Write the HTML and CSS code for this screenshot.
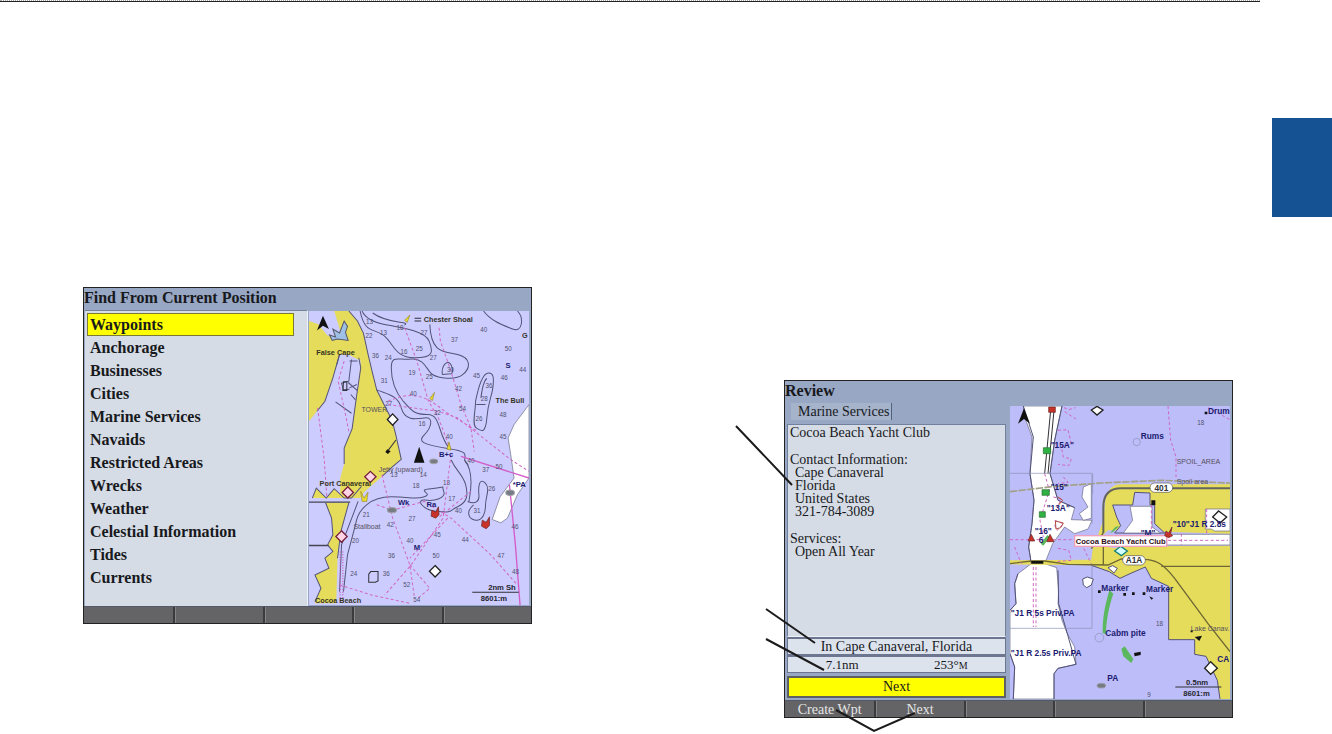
FILE: index.html
```html
<!DOCTYPE html>
<html lang="en">
<head>
<meta charset="utf-8">
<title>Find and Review</title>
<link rel="stylesheet" href="styles.css">
</head>
<body>
<hr class="rule">
<main class="page">
  <section class="device find">
    <h2 class="title">Find From Current Position</h2>
    <div class="screen">
      <ul class="menu">
        <li><button class="item selected">Waypoints</button></li>
        <li><button class="item">Anchorage</button></li>
        <li><button class="item">Businesses</button></li>
        <li><button class="item">Cities</button></li>
        <li><button class="item">Marine Services</button></li>
        <li><button class="item">Navaids</button></li>
        <li><button class="item">Restricted Areas</button></li>
        <li><button class="item">Wrecks</button></li>
        <li><button class="item">Weather</button></li>
        <li><button class="item">Celestial Information</button></li>
        <li><button class="item">Tides</button></li>
        <li><button class="item">Currents</button></li>
      </ul>
      <svg class="map" viewBox="12 20 663 880" preserveAspectRatio="none" role="img" aria-label="Chart of Cape Canaveral">
        <rect class="water" x="12" y="20" width="663" height="880"/>
        <!-- land -->
        <path class="land" d="M12 50L40 60 66 92 92 104 112 98 100 60 88 20H132L158 50 176 86 190 150 202 200 216 256 238 300 262 346 274 392 290 464 264 486 232 515 180 560 166 580H22L34 550 64 580 88 552 118 580H106V520L118 478 118 430 142 372 156 270 160 250 168 170 150 160 130 150H104L84 220 60 290 36 320 12 350Z"/>
        <path class="land" d="M62 594H132L108 680 98 760 94 895H30L48 850 30 810 72 790 60 760 84 740 68 720 84 690 80 640Z"/>
        <path class="channel" d="M12 592H136M12 722H72"/>
        <path class="coast" d="M132 20L158 50 176 86 190 150 202 200 216 256 238 300 262 346 274 392 290 464 264 486 232 515 M118 478L118 430 142 372 156 270 168 190 162 160M104 150L84 220 60 290 36 320 M22 580L34 550 64 580 88 552 118 580H140L170 545M132 594L108 680 98 760M62 594L80 640 84 690 68 720 84 740 60 760 72 790 30 810 48 850 30 890"/>
        <path class="inlet" d="M74 92L92 98 84 74 104 86 118 50 128 66 122 84 130 108 98 104 82 108Z"/>
        <path class="coast" d="M104 150L96 180M140 165L132 230 110 236 116 256 134 254M92 292L140 326M134 250L156 240M138 270L152 286M134 170H158M130 234L158 258"/>
        <path class="shoal" d="M675 300L630 360 612 400 620 450 630 520 588 576 564 644 590 654 610 640 640 570 675 520Z"/>
        <!-- depth contours -->
        <path class="contour" d="M166 20C180 90 208 70 238 94S270 160 330 160 386 140 374 110 290 70 248 62 180 40 172 20M204 26C250 60 320 50 300 62M376 60C380 150 420 140 460 150S500 190 476 210 400 220 384 210 360 160 320 164 260 150 260 190 270 260 296 290 330 330 370 330 400 390 434 430M216 256C250 270 280 272 290 310S330 344 360 340 380 370 360 390 350 420 434 432 460 460 492 480M414 210C410 190 422 172 432 174S450 204 440 208ZM514 290C520 260 532 210 550 206S570 220 566 250 552 290 548 340 530 380 516 370 514 320 514 290ZM530 280C534 250 538 228 548 222M516 300H544M538 20C560 50 596 62 626 74S660 40 640 20"/>
        <path class="contour" d="M116 860L128 750 152 660C160 610 200 576 260 576S330 586 360 576 330 556 380 552 410 540 418 560 390 590 362 586 350 616 400 620 430 620 460 606 492 570 484 540 456 500 440 465M480 465C510 500 500 560 494 590M508 600C484 620 492 644 514 646S544 624 544 600 560 550 542 534 522 550 524 570 514 600 490 590M104 860L110 720 160 590"/>
        <!-- routes and borders -->
        <path class="dash" d="M38 310L58 465 66 580M118 170L100 230 122 330 132 380M300 70L326 140 340 180 372 290 402 340 440 440M404 70L408 110 440 200 470 300 500 370 510 440M250 300L400 320 460 340 620 465 675 500M250 290C320 260 360 270 420 320L520 380M232 510L264 640 316 780 330 880M440 450L416 640 320 780 240 870M216 600L264 616 360 590 440 640 560 750 640 840M316 780L376 850 340 880M104 840L200 870 320 896M430 640L316 760M500 560L400 640"/>
        <path class="route" d="M616 540L634 720 648 900M470 455L675 520"/>
        <path class="hatch" d="M106 740V890M114 740V890"/>
        <!-- position marker and chart symbols -->
        <path class="ink" d="M344 426L328 474H360ZM54 34L36 78 54 64 72 74ZM248 434L258 440 250 448 242 442Z"/>
        <path class="thin" d="M250 438L274 406"/>
        <g class="diamond"><path d="M264 328L280 345 264 362 248 345Z"/><path d="M392 782L409 799 392 816 375 799Z"/></g>
        <g class="diamond pinkmark"><path d="M197 500L214 516 197 533 180 516ZM129 546L146 563 129 580 112 563ZM110 678L127 695 110 712 93 695Z"/></g>
        <path class="thin" d="M198 800H220V828L212 832H192V808ZM116 232H126V258H114Z"/>
        <g class="buoy"><path d="M382 616L394 622 402 606 404 630 394 640 380 634ZM534 646L546 652 556 636 556 662 546 672 532 664Z"/></g>
        <g class="light"><path d="M300 48L316 32 308 54ZM376 282L390 264 384 288ZM428 434L434 412 440 436ZM168 560L178 580 190 562 186 590H172Z"/></g>
        <g class="wreck"><ellipse cx="388" cy="470" rx="12" ry="7"/><ellipse cx="262" cy="616" rx="14" ry="8"/><ellipse cx="618" cy="564" rx="13" ry="8"/></g>
        <!-- soundings -->
        <g class="sounding">
          <text x="184" y="60">13</text><text x="226" y="92">13</text><text x="182" y="102">22</text><text x="276" y="78">18</text><text x="348" y="92">27</text><text x="440" y="114">37</text><text x="528" y="84">40</text><text x="602" y="140">50</text><text x="334" y="140">25</text><text x="202" y="162">36</text><text x="240" y="168">24</text><text x="376" y="166">27</text><text x="288" y="148">16</text><text x="312" y="212">19</text><text x="364" y="224">25</text><text x="428" y="202">30</text><text x="228" y="236">31</text><text x="242" y="304">27</text><text x="316" y="274">40</text><text x="506" y="222">45</text><text x="590" y="228">46</text><text x="544" y="250">36</text><text x="530" y="290">28</text><text x="452" y="260">42</text><text x="464" y="318">54</text><text x="514" y="348">26</text><text x="586" y="336">48</text><text x="586" y="402">45</text><text x="342" y="364">16</text><text x="424" y="402">40</text><text x="388" y="330">32</text><text x="490" y="474">40</text><text x="646" y="204">44</text><text x="258" y="516">13</text><text x="346" y="516">14</text><text x="416" y="542">13</text><text x="534" y="502">37</text><text x="574" y="494">50</text><text x="324" y="550">18</text><text x="432" y="588">17</text><text x="552" y="558">26</text><text x="174" y="636">21</text><text x="312" y="648">27</text><text x="452" y="624">40</text><text x="508" y="624">31</text><text x="246" y="666">42</text><text x="306" y="714">40</text><text x="388" y="696">45</text><text x="472" y="712">44</text><text x="622" y="672">46</text><text x="142" y="714">20</text><text x="250" y="760">36</text><text x="384" y="760">50</text><text x="580" y="760">47</text><text x="136" y="814">24</text><text x="234" y="812">36</text><text x="296" y="846">52</text><text x="624" y="808">48</text><text x="326" y="892">54</text>
        </g>
        <g class="place"><text x="34" y="152">False Cape</text><text x="358" y="52">Chester Shoal</text><text x="574" y="296">The Bull</text><text x="44" y="544">Port Canaveral</text><text x="654" y="100">G</text><text x="30" y="894">Cocoa Beach</text></g>
        <g class="place minor"><text x="170" y="322">TOWER</text><text x="222" y="502">Jetty (upward)</text><text x="146" y="674">Stallboat</text></g>
        <g class="mark"><text x="280" y="602">Wk</text><text x="626" y="548">*PA</text><text x="328" y="734">M</text><text x="366" y="606">Ra</text><text x="404" y="456">B+c</text><text x="604" y="192">S</text></g>
        <path class="thin" d="M504 862H644M330 42H350M330 50H350"/>
        <g class="scale"><text x="552" y="856">2nm Sh</text><text x="530" y="888">8601:m</text></g>
      </svg>
    </div>
    <div class="keys"><button aria-label="Key 1"></button><button aria-label="Key 2"></button><button aria-label="Key 3"></button><button aria-label="Key 4"></button><button aria-label="Key 5"></button></div>
  </section>

  <section class="device review">
    <h2 class="title">Review</h2>
    <div class="screen">
      <div class="info">
        <button class="tab">Marine Services</button>
        <div class="details">
          <p>Cocoa Beach Yacht Club</p>
          <p>Contact Information:</p>
          <ul><li>Cape Canaveral</li><li>Florida</li><li>United States</li><li>321-784-3089</li></ul>
          <p>Services:</p>
          <ul><li>Open All Year</li></ul>
        </div>
        <p class="line">In Cape Canaveral, Florida</p>
        <p class="line pair"><span>7.1nm</span><span>253°<small>M</small></span></p>
        <button class="next">Next</button>
      </div>
      <svg class="map" viewBox="6 87 660 879" preserveAspectRatio="none" role="img" aria-label="Chart near Cocoa Beach Yacht Club">
        <rect class="water deep" x="6" y="87" width="660" height="879"/>
        <!-- shallow lagoon -->
        <path class="shoal" d="M46 87H162L140 190 126 290 138 330 150 370 200 392 190 428 252 430 240 456 200 470 170 450 134 500 110 560 146 572 152 640 150 680 162 730 178 770 200 810 204 862 150 874 138 890V966H16L20 870 6 830V700L24 680 20 620 30 590 70 560 62 510 72 440 78 370 66 290 72 180 50 120Z"/>
        <path class="shoal" d="M226 330L250 320V424L226 430 214 410 240 390 222 360Z"/>
        <path class="land" d="M666 322H340C310 322 300 340 292 370L286 430 268 480 250 510 290 508 320 514 350 508 666 506V966H636L628 910 594 838 560 832V788H482V628L430 604 412 570 366 590 336 604 304 584 256 565 6 562V550L250 548 256 500 300 460 666 470Z"/>
        <path class="water deep coast" d="M314 384H374L380 346 426 348V384H440V440L470 468H320L338 446 326 420Z"/>
        <path class="shoal" d="M366 388H432V450L458 468H346L374 430ZM592 396H666V462H620L610 456H592ZM476 472H666V504H476Z"/>
        <path class="coast" d="M46 87L76 180 66 290 78 370 72 440 62 510 70 560M162 87L140 190 126 290 138 330 150 370 200 392M150 580L152 680 178 770 204 862 150 874 138 890V966M30 590L20 620 24 680 6 700M6 830L20 870 16 966M412 570L430 604 482 628V788H560V832L594 838 628 910 636 966M250 565L304 584 336 604 366 590 412 570"/>
        <path class="road heavy" d="M286 468V390C286 350 308 334 340 334H666"/>
        <path class="road" d="M6 560L70 552H110L180 562 300 564 340 546 420 548C450 552 468 564 500 604L600 740 666 824M460 568H666M286 468L250 515M286 508V562"/>
        <path class="causeway" d="M6 344L140 328 280 318 460 310 666 318"/>
        <path class="thin" d="M128 100L110 290M138 100L120 290"/>
        <path class="contour light-line" d="M6 289H252V440M252 565V754H6M254 290V350"/>
        <path class="dash" d="M480 87L488 190 504 240V300M110 290L124 340 96 430 106 480M76 570V750M84 570V750M6 488H200M150 160L180 158 190 200 160 210 166 240 190 246 182 266 150 262M168 92L182 98 202 92M170 104L204 126M166 300L180 316 150 320M136 360L160 366 148 390M140 430L166 440 148 460 136 438M430 384V468M596 396V470M520 470V504M480 490H660M600 92L666 128M150 514L182 520 190 550 142 554M20 510L40 560M220 500L250 560"/>
        <path class="green" d="M304 640C290 690 284 720 284 768L294 772C294 734 302 690 316 650ZM340 816L350 808 376 846 370 858 346 838ZM306 468L322 450 334 446 316 464ZM98 500L118 474 126 480 106 506Z"/>
        <g class="beacon"><path d="M106 212H128V230H106ZM102 338H124V355H102ZM94 404H112V421H94Z"/></g>
        <path class="redmark" d="M122 90H142V106H122ZM70 472L80 492H60ZM126 472L138 494H116Z"/>
        <path class="thin rust" d="M142 432L166 438 158 452 144 456ZM150 360L164 370 150 386"/>
        <path class="ink" d="M48 94L30 140 48 126 66 140ZM430 370H442V384H430ZM270 640H278V648H270ZM346 648H354V656H346ZM372 646H380V654H372ZM404 646H412V654H404ZM378 828L398 824V834L380 838ZM560 780L582 776 574 792ZM424 658L436 664 430 668ZM590 104H598V112H590ZM70 552H106V560H70ZM548 760H554V766H548Z"/>
        <circle class="contour light-line" cx="386" cy="195" r="11"/><circle class="contour light-line" cx="274" cy="782" r="13"/>
        <path class="shoal coast" d="M224 606L238 600 256 606 250 624 236 632 226 624ZM300 572L314 566 328 574 318 588Z"/>
        <g class="diamond"><path d="M267 88L285 99 267 114 250 99ZM608 854L628 874 608 892 590 874ZM632 402L656 420 636 438 614 420Z"/></g>
        <path class="teal" d="M338 508L358 522 340 536 320 522Z"/>
        <ellipse class="wreck" cx="280" cy="926" rx="13" ry="7"/>
        <rect class="shield" x="426" y="318" width="68" height="28" rx="14"/><rect class="shield" x="344" y="536" width="68" height="28" rx="14"/>
        <g class="roadno"><text x="460" y="341">401</text><text x="378" y="558">A1A</text></g>
        <g class="mark wide"><text x="128" y="212">"15A"</text><text x="128" y="338">"15"</text><text x="116" y="402">"13A"</text><text x="80" y="472">"16"</text><text x="92" y="498">6</text><text x="398" y="186">Rums</text><text x="600" y="112">Drum</text><text x="494" y="450">"10"J1 R 2.8s</text><text x="280" y="642">Marker</text><text x="414" y="646">Marker</text><text x="8" y="718">"J1 R 5s Priv.PA</text><text x="8" y="838">"J1 R 2.5s Priv.PA</text><text x="292" y="776">Cabm pite</text><text x="298" y="912">PA</text><text x="628" y="854">CA</text><text x="398" y="476">"M"</text></g>
        <g class="sounding"><text x="568" y="144">18</text><text x="444" y="746">18</text><text x="418" y="960">9</text></g>
        <g class="place minor"><text x="506" y="262">SPOIL_AREA</text><text x="506" y="322">Spoil area</text><text x="548" y="762">Lake Canav.</text></g>
        <rect class="callout" x="200" y="476" width="276" height="32"/>
        <text class="callout-text" x="338" y="500">Cocoa Beach Yacht Club</text>
        <path class="redmark" d="M474 462L482 468 492 450 488 470 494 476 482 482 470 476Z"/>
        <path class="thin" d="M502 930H640"/>
        <g class="scale"><text x="534" y="924">0.5nm</text><text x="526" y="956">8601:m</text></g>
      </svg>
    </div>
    <div class="keys"><button>Create Wpt</button><button>Next</button><button aria-label="Key 3"></button><button aria-label="Key 4"></button><button aria-label="Key 5"></button></div>
    <svg class="leaders" viewBox="720 410 220 324" aria-hidden="true">
      <path d="M736 426L792 485M766 609L815 643M766 639L824 670M836 710L874 731 915 713"/>
    </svg>
  </section>
  <aside class="chapter" aria-label="Chapter tab"></aside>
</main>
</body>
</html>
```
FILE: styles.css
```css
* { box-sizing: border-box; }
body { margin: 0; min-height: 100vh; background: #fff; color: #18191d; font-family: "Liberation Serif", "Times New Roman", serif; }
p, ul, h2 { margin: 0; padding: 0; }
ul { list-style: none; }
button { font: inherit; color: inherit; border: 0; padding: 0; margin: 0; background: none; border-radius: 0; }

.rule { width: 94.6%; height: 2px; margin: 0; border: 0; border-top: 1px dotted #aaa; border-bottom: 1px solid #222; }
.page { display: grid; grid-template-columns: 83fr 449fr 252fr 449fr 39fr 60fr; align-items: start; padding-bottom: 17px; }

.device { position: relative; display: flex; flex-direction: column; min-width: 0; border: 1px solid #222; background: #98a8c4; }
.find { grid-area: 1 / 2; margin-top: 285px; }
.review { grid-area: 1 / 4; margin-top: 378px; }
.chapter { grid-area: 1 / 6; margin-top: 116px; height: 99px; background: #145294; }
.title { font-size: 16px; line-height: 20px; font-weight: bold; height: 22px; }

.screen { display: grid; grid-template-columns: 224fr 223fr; }
.menu { margin-left: 1px; padding: 2px 13px 17px 2px; background: #d5dce5; border-top: 1px solid #75829b; border-right: 1px solid #eef2f8; }
.item { display: block; width: 100%; height: 23px; padding: 0 3px; text-align: left; font-size: 16px; line-height: 22px; font-weight: bold; }
.selected { background: #ff0; border: 1px solid #7a7a36; padding: 0 2px; line-height: 18px; }

.info { display: flex; flex-direction: column; padding: 0 3px 2px 2px; font-size: 14px; }
.tab { align-self: flex-start; height: 17px; margin: 0 0 4px 4px; padding: 0 2px 0 7px; line-height: 16px; background: #a5b3cb; border-right: 1px solid #526080; }
.details { flex: 1; min-height: 212px; padding: 1px 2px; line-height: 13px; background: #d5dce5; border: 1px solid #71809c; border-bottom-color: #edf1f7; }
.details p + p, .details ul + p { margin-top: 14px; }
.details ul { padding-left: 5px; }
.line { height: 18px; line-height: 15px; text-align: center; background: #dce3ed; border: 1px solid #6c7690; border-top-width: 2px; }
.pair { display: grid; grid-template-columns: 1fr 1fr; font-size: 13px; }
.pair small { font-size: 10px; }
.next { height: 22px; margin-top: 3px; background: #ff0; border: 2px solid #5e6064; line-height: 16px; }

.map { display: block; width: 100%; height: 100%; min-height: 0; padding: 1px 2px 1px 1px; }
.review .map { padding-top: 3px; }
.keys { display: grid; grid-template-columns: repeat(5, 1fr); height: 17px; background: #646466; border-top: 1px solid #53596a; color: #e6e6e6; font-size: 14px; line-height: 15px; }
.keys button + button { border-left: 2px solid #3b3b3d; box-shadow: inset 1px 0 #858587; }

.leaders { position: absolute; left: -65px; top: 29px; width: 220px; height: 324px; pointer-events: none; }
.leaders path { fill: none; stroke: #1c1a1b; stroke-width: 2; }

.water { fill: #ccccff; }
.deep { fill: #bdbdf9; }
.land { fill: #e6dc5c; }
.shoal { fill: #fff; stroke: #666680; stroke-width: 2; }
.inlet { fill: #9fc0e6; stroke: #556; stroke-width: 3; }
.coast, .contour { fill: none; stroke: #535378; stroke-width: 3; }
.deep.coast { fill: #bdbdf9; }
.shoal.coast { fill: #fff; }
.light-line { stroke: #8a90b4; stroke-width: 2; }
.channel { fill: none; stroke: #445; stroke-width: 4; }
.dash { fill: none; stroke: #cf68c0; stroke-width: 3; stroke-dasharray: 9 7; }
.route { fill: none; stroke: #d45cc8; stroke-width: 4; }
.hatch { fill: none; stroke: #c060c8; stroke-width: 4; stroke-dasharray: 3 5; }
.road { fill: none; stroke: #6e6734; stroke-width: 4; }
.heavy { stroke: #62645f; stroke-width: 6; }
.causeway { fill: none; stroke: #a2a184; stroke-width: 5; stroke-dasharray: 22 4; }
.ink { fill: #111; }
.thin { fill: none; stroke: #303036; stroke-width: 3; }
.rust { stroke: #b4483c; }
.diamond { fill: #fff; stroke: #222; stroke-width: 4; }
.pinkmark { fill: #ffd4e4; stroke: #74203c; }
.buoy, .redmark { fill: #c83228; stroke: #642424; stroke-width: 2; }
.light { fill: #e8dc30; stroke: #99882c; stroke-width: 2; }
.wreck { fill: #777c84; stroke: #a0a0a8; stroke-width: 3; }
.green { fill: #5bb85e; }
.beacon { fill: #2fb144; stroke: #286e30; stroke-width: 2; }
.teal { fill: #d2ffff; stroke: #178078; stroke-width: 4; }
.map text { font-family: "Liberation Sans", Arial, sans-serif; }
.sounding { fill: #51516e; font-size: 19px; }
.place { fill: #35351f; font-size: 22px; font-weight: bold; }
.minor { fill: #55505c; font-size: 21px; font-weight: normal; }
.mark { fill: #1b1b70; font-size: 23px; font-weight: bold; }
.wide { font-size: 25px; }
.scale { fill: #24242c; font-size: 23px; font-weight: bold; }
.shield { fill: #fff; stroke: #555; stroke-width: 2; }
.roadno { fill: #333; font-size: 25px; font-weight: bold; text-anchor: middle; }
.callout { fill: #fff; stroke: #f0a0bc; stroke-width: 4; }
.callout-text { fill: #301018; font-size: 23px; font-weight: bold; text-anchor: middle; }
```
